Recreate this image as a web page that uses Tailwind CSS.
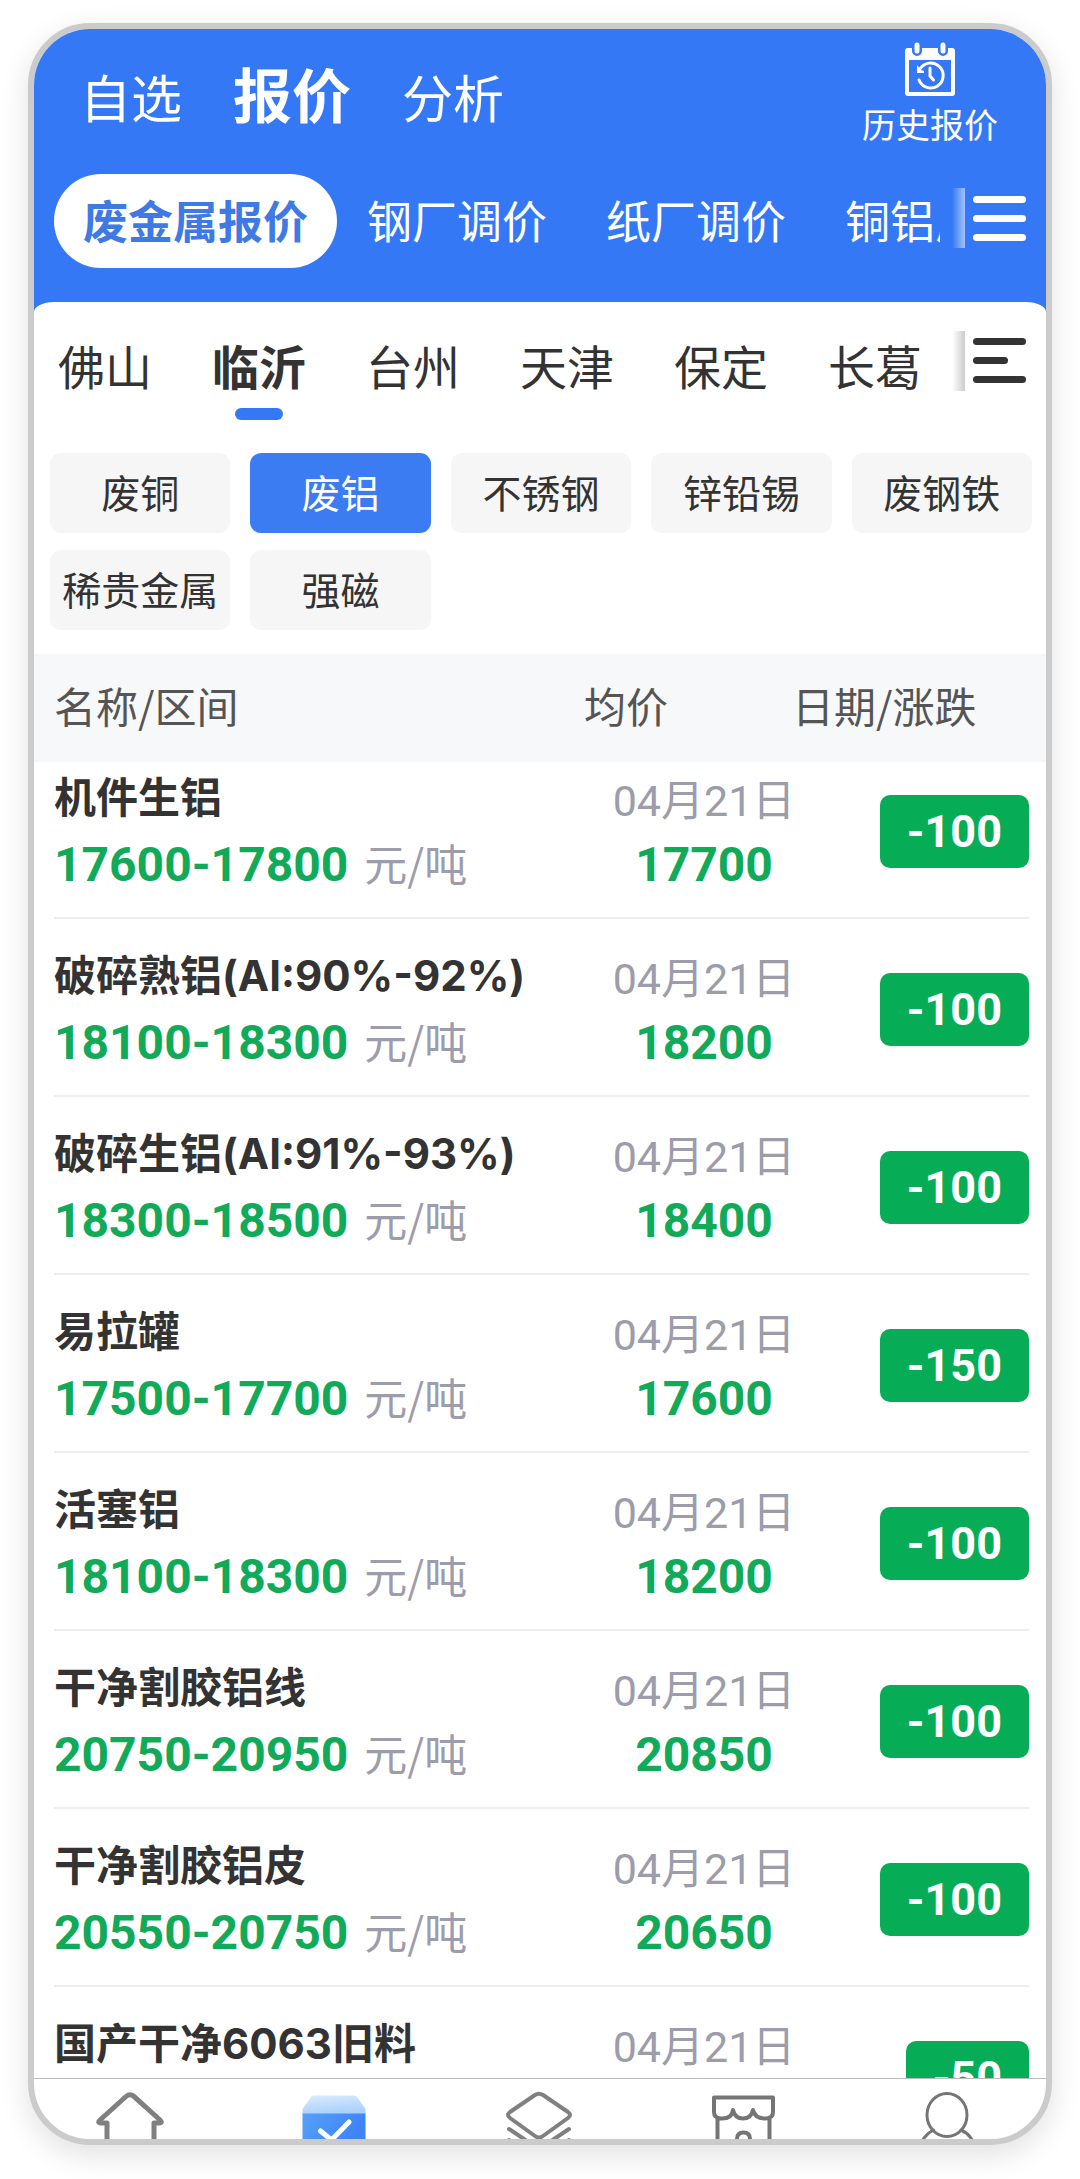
<!DOCTYPE html>
<html lang="zh-CN">
<head>
<meta charset="utf-8">
<meta name="viewport" content="width=device-width, initial-scale=1">
<title>报价</title>
<script src="https://cdn.jsdelivr.net/npm/@tailwindcss/browser@4"></script>
</head>
<body class="h-screen bg-white px-7 pt-[23px] pb-[34px] font-['Noto_Sans_CJK_SC',sans-serif] text-[#333]">
<div class="flex h-full flex-col overflow-hidden rounded-[62px] border-6 border-[#cbcbcb] bg-white shadow-[0_10px_30px_rgba(0,0,0,0.12)]">

  <header class="bg-[#3478f5] text-white">
    <div class="flex h-[145px] justify-between pr-[48px] pl-[46px]">
      <nav class="flex items-baseline gap-[51px] pt-[22px] text-[51px] leading-[84px]">
        <a href="#">自选</a>
        <a href="#" class="text-[59px] font-bold" aria-current="page">报价</a>
        <a href="#">分析</a>
      </nav>
      <button type="button" class="flex flex-col items-center pt-[13px] text-[34px] leading-[56px]">
        <svg class="h-[54px] w-[50px]" viewBox="0 0 50 54" fill="none" aria-hidden="true">
          <path fill="#fff" fill-rule="evenodd" d="M3 6H7V9a5 5 0 0 0 10 0V6H33V9a5 5 0 0 0 10 0V6H47a3 3 0 0 1 3 3V51a3 3 0 0 1-3 3H3a3 3 0 0 1-3-3V9a3 3 0 0 1 3-3ZM4 18V50H46V18Z"/>
          <path stroke="#fff" stroke-width="5" stroke-linecap="round" d="M12 3V9M38 3V9"/>
          <path stroke="#fff" stroke-width="3" stroke-linecap="round" d="M14 38A12.500 12.500 0 1 0 15 27"/>
          <path fill="#fff" d="M12 23V31H19V29L16 28Z"/>
          <path stroke="#fff" stroke-width="3" stroke-linecap="round" stroke-linejoin="round" d="M25 26V34L28.500 38"/>
        </svg>
        <span>历史报价</span>
      </button>
    </div>
    <div class="flex h-[94px] items-center pl-5">
      <nav class="flex min-w-0 flex-1 gap-px overflow-hidden text-[45px] leading-[92px] whitespace-nowrap">
        <a href="#" class="shrink-0 rounded-full bg-white px-[29px] pb-[2px] font-bold text-[#3f7ae4]" aria-current="page">废金属报价</a>
        <a href="#" class="shrink-0 px-[29px]">钢厂调价</a>
        <a href="#" class="shrink-0 px-[29px]">纸厂调价</a>
        <a href="#" class="shrink-0 pl-[29px]">铜铝厂调价</a>
      </nav>
      <span class="mb-[6px] ml-3 h-[60px] w-[13px] bg-linear-to-r from-white/0 to-white/55"></span>
      <button type="button" class="mr-5 ml-2 flex w-[53px] flex-col gap-3 pb-[5px]" aria-label="全部分类">
        <span class="h-[7px] w-full rounded-full bg-white"></span>
        <span class="h-[7px] w-full rounded-full bg-white"></span>
        <span class="h-[7px] w-full rounded-full bg-white"></span>
      </button>
    </div>
    <div class="mt-[34px] h-[10px] bg-white [border-radius:20px_20px_0_0/10px_10px_0_0]"></div>
  </header>

  <div class="flex h-[108px] items-start pt-[15px] pl-6">
    <nav class="flex min-w-0 flex-1 gap-[60px] overflow-hidden text-[47px] leading-[76px] whitespace-nowrap">
      <a href="#" class="shrink-0">佛山</a>
      <a href="#" class="flex shrink-0 flex-col items-center font-bold" aria-current="page">临沂<span class="mt-[5px] h-3 w-12 rounded-full bg-[#3478f5]"></span></a>
      <a href="#" class="shrink-0">台州</a>
      <a href="#" class="shrink-0">天津</a>
      <a href="#" class="shrink-0">保定</a>
      <a href="#" class="shrink-0">长葛</a>
    </nav>
    <span class="mt-1 h-[60px] w-[13px] bg-linear-to-r from-black/0 to-black/20"></span>
    <button type="button" class="mt-[11px] mr-5 ml-2 flex w-[53px] flex-col gap-3" aria-label="全部地区">
      <span class="h-[7px] w-full rounded-full bg-[#333]"></span>
      <span class="h-[7px] w-[35px] rounded-full bg-[#333]"></span>
      <span class="h-[7px] w-full rounded-full bg-[#333]"></span>
    </button>
  </div>

  <div class="grid grid-cols-5 gap-x-5 gap-y-[17px] pt-[33px] pr-[14px] pb-6 pl-4 text-[39px] leading-[76px] whitespace-nowrap">
    <button type="button" class="rounded-[11px] bg-[#f6f6f6] pb-1">废铜</button>
    <button type="button" class="rounded-[11px] bg-[#3b7cf2] pb-1 text-white" aria-pressed="true">废铝</button>
    <button type="button" class="rounded-[11px] bg-[#f6f6f6] pb-1">不锈钢</button>
    <button type="button" class="rounded-[11px] bg-[#f6f6f6] pb-1">锌铅锡</button>
    <button type="button" class="rounded-[11px] bg-[#f6f6f6] pb-1">废钢铁</button>
    <button type="button" class="rounded-[11px] bg-[#f6f6f6] pb-1">稀贵金属</button>
    <button type="button" class="rounded-[11px] bg-[#f6f6f6] pb-1">强磁</button>
  </div>

  <main class="min-h-0 flex-1 overflow-hidden">
    <table class="w-full table-fixed whitespace-nowrap">
      <colgroup><col><col class="w-[208px]"><col class="w-[254px]"></colgroup>
      <thead class="bg-[#f7f8fa] text-left text-[42px] leading-[102px] text-[#555]">
        <tr>
          <th scope="col" class="pb-[6px] pl-5 font-normal">名称/区间</th>
          <th scope="col" class="pb-[6px] font-normal">均价</th>
          <th scope="col" class="pb-[6px] font-normal">日期/涨跌</th>
        </tr>
      </thead>
      <tbody id="rows"></tbody>
    </table>
  </main>

  <nav class="flex h-[61px] shrink-0 justify-between border-t border-[#bbb] pr-[65px] pl-[62px]">
    <a href="#" aria-label="首页"><svg class="h-[60px] w-[68px]" viewBox="0 0 68 60" fill="none" stroke="#808080" stroke-width="5" stroke-linejoin="round" aria-hidden="true"><path d="M11 62V44H5Q1 44 4 41L30 17.500Q34 14 38 17.500L64 41Q67 44 63 44H58V62"/></svg></a>
    <a href="#" aria-label="报价" aria-current="page"><svg class="h-[60px] w-[68px]" viewBox="0 0 68 60" fill="none" aria-hidden="true">
      <defs>
        <linearGradient id="lid" x1="0" y1="0" x2="0.300" y2="1"><stop stop-color="#dcebfd"/><stop offset="1" stop-color="#a9d1fb"/></linearGradient>
        <linearGradient id="box" x1="0" y1="0" x2="1" y2="0.300"><stop stop-color="#55a2f8"/><stop offset="1" stop-color="#3f83f7"/></linearGradient>
      </defs>
      <path fill="url(#lid)" d="M14 16.500H54Q56 16.500 57 18L65.500 30V35H2.500V30L11 18Q12 16.500 14 16.500Z"/>
      <path fill="url(#box)" d="M2.500 34.500H65.500V60H2.500Z"/>
      <path stroke="#fff" stroke-width="5" stroke-linecap="round" stroke-linejoin="round" d="M20.500 52L31.500 61L49 43"/>
    </svg></a>
    <a href="#" aria-label="资讯"><svg class="h-[60px] w-[68px]" viewBox="0 0 68 60" fill="none" stroke="#808080" stroke-width="4" stroke-linecap="round" stroke-linejoin="round" aria-hidden="true"><path d="M30 16Q34 13.500 38 16L63 33Q67 36 63 39L38 57Q34 60 30 57L5 39Q1 36 5 33ZM4 50L22 62M64 50L46 62M4 61L10 65M64 61L58 65"/></svg></a>
    <a href="#" aria-label="商城"><svg class="h-[60px] w-[68px]" viewBox="0 0 68 60" fill="none" stroke="#757575" stroke-width="4" stroke-linecap="round" stroke-linejoin="round" aria-hidden="true"><path d="M5 18.500H64V33Q64 39.500 56 39.500Q46 39.500 44 31Q42 39.500 34 39.500Q26 39.500 24 31Q23 39.500 13 39.500Q5 39.500 5 33ZM8.500 40V64M60.500 40V64M28 64V60Q28 53.500 34.500 53.500Q41 53.500 41 60V64"/></svg></a>
    <a href="#" aria-label="我的"><svg class="h-[60px] w-[68px]" viewBox="0 0 68 60" fill="none" stroke="#757575" stroke-width="3" stroke-linecap="round" aria-hidden="true"><ellipse cx="34" cy="36" rx="20" ry="21.500"/><path d="M20.500 51Q14 54 9 62M48 51Q55 54 60 62"/></svg></a>
  </nav>
</div>

<script>
  const quotes = [
    ['机件生铝', '17600-17800', '17700', '-100'],
    ['破碎熟铝(AI:90%-92%)', '18100-18300', '18200', '-100'],
    ['破碎生铝(AI:91%-93%)', '18300-18500', '18400', '-100'],
    ['易拉罐', '17500-17700', '17600', '-150'],
    ['活塞铝', '18100-18300', '18200', '-100'],
    ['干净割胶铝线', '20750-20950', '20850', '-100'],
    ['干净割胶铝皮', '20550-20750', '20650', '-100'],
    ['国产干净6063旧料', '21150-21350', '21250', '-50'],
  ];
  document.getElementById('rows').innerHTML = quotes.map(([name, range, avg, diff], i) => {
    const h = i === 0 ? 'h-[157px]' : 'h-[178px]';
    return `<tr>
      <td class="p-0 pl-5"><div class="${h} flex flex-col justify-end gap-1 border-b-2 border-[#eee] pb-[22px]">
        <div class="font-['Inter','Noto_Sans_CJK_SC',sans-serif] text-[42px] leading-[60px] font-bold">${name}</div>
        <div class="flex items-baseline gap-4 leading-[60px]"><span class="font-['Roboto',sans-serif] text-[48px] font-bold text-[#10aa58]">${range}</span><span class="text-[43px] text-[#9c9cab]">元/吨</span></div>
      </div></td>
      <td class="p-0"><div class="${h} flex flex-col items-center justify-end gap-1 border-b-2 border-[#eee] pb-[22px] pl-8 font-['Roboto','Noto_Sans_CJK_SC',sans-serif] leading-[60px]">
        <div class="text-[43px] text-[#9c9cab]">04月21日</div>
        <div class="text-[48px] font-bold text-[#10aa58]">${avg}</div>
      </div></td>
      <td class="p-0 pr-[17px]"><div class="${h} flex items-end justify-end border-b-2 border-[#eee] pb-[49px]">
        <span class="rounded-[10px] bg-[#07ad56] px-[27px] font-['Roboto',sans-serif] text-[45px] leading-[73px] font-bold text-white">${diff}</span>
      </div></td>
    </tr>`;
  }).join('');
</script>
</body>
</html>
